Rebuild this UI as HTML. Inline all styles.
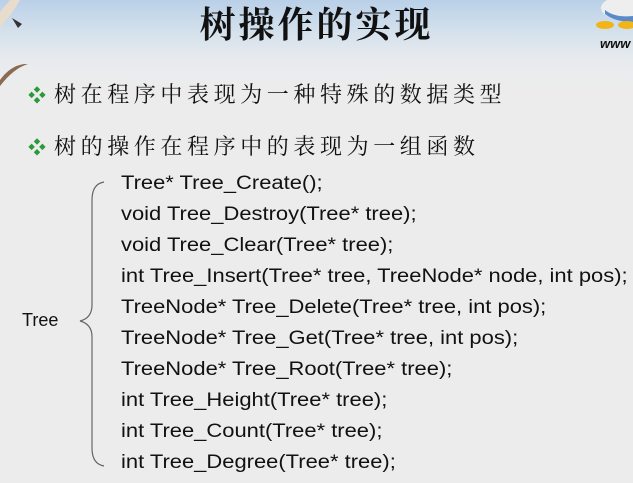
<!DOCTYPE html>
<html><head><meta charset="utf-8"><style>
body{margin:0;width:633px;height:483px;overflow:hidden;position:relative;
background:linear-gradient(#b9d0e8 0px,#d3e0ec 30px,#e8ebee 60px,#ececec 90px,#ececec 483px);
font-family:"Liberation Sans","Noto Sans CJK SC",sans-serif;color:#111}
.t{position:absolute;left:0;width:633px;top:-3px;text-align:center;font-size:36px;font-weight:bold;font-family:"Noto Serif CJK SC","Liberation Serif",serif;letter-spacing:3px}
.b{position:absolute;left:28px;font-size:22px;font-family:"Noto Serif CJK SC",serif;letter-spacing:4.6px}
.b i{color:#2a9a3a;font-style:normal;font-size:18px;margin-right:8px;letter-spacing:0}
.c{position:absolute;left:121px;font-size:19px;white-space:nowrap;transform-origin:0 0;transform:scaleX(1.155)}
</style></head><body>
<svg style="position:absolute;left:0;top:0" width="40" height="90">
<path d="M0 28 L14 10 L20 0 L10 0 L0 12Z" fill="#e8dccc"/>
<path d="M12 18 L22 24 L18 28Z" fill="#333"/>
<path d="M0 80 Q10 66 24 64 L28 64 Q14 68 0 86Z" fill="#8a6a50"/>
</svg>
<svg style="position:absolute;left:595px;top:0" width="38" height="32">
<ellipse cx="30" cy="8" rx="24" ry="12" fill="#eee"/>
<path d="M10 10 Q20 18 38 16 L38 22 Q20 22 10 14Z" fill="#5a8bc8"/>
<ellipse cx="10" cy="25" rx="9" ry="4" fill="#f2b519"/>
<ellipse cx="32" cy="25" rx="9" ry="4" fill="#f2b519"/>
</svg>
<div style="position:absolute;left:600px;top:36px;font-size:13px;font-style:italic;font-weight:bold">www</div>
<div class="t">树操作的实现</div>
<div class="b" style="top:78px"><i>❖</i>树在程序中表现为一种特殊的数据类型</div>
<div class="b" style="top:130px"><i>❖</i>树的操作在程序中的表现为一组函数</div>
<div style="position:absolute;left:22px;top:310px;font-size:18px">Tree</div>
<svg style="position:absolute;left:76px;top:180px" width="30" height="290">
<path d="M28 2 Q16 4 16 20 L16 125 Q16 138 4 141 Q16 144 16 157 L16 268 Q16 284 28 286" fill="none" stroke="#666" stroke-width="1.2"/>
</svg>
<div class="c" style="top:173px">Tree* Tree_Create();</div>
<div class="c" style="top:204px">void Tree_Destroy(Tree* tree);</div>
<div class="c" style="top:235px">void Tree_Clear(Tree* tree);</div>
<div class="c" style="top:266px">int Tree_Insert(Tree* tree, TreeNode* node, int pos);</div>
<div class="c" style="top:297px">TreeNode* Tree_Delete(Tree* tree, int pos);</div>
<div class="c" style="top:328px">TreeNode* Tree_Get(Tree* tree, int pos);</div>
<div class="c" style="top:359px">TreeNode* Tree_Root(Tree* tree);</div>
<div class="c" style="top:390px">int Tree_Height(Tree* tree);</div>
<div class="c" style="top:421px">int Tree_Count(Tree* tree);</div>
<div class="c" style="top:452px">int Tree_Degree(Tree* tree);</div>
</body></html>
